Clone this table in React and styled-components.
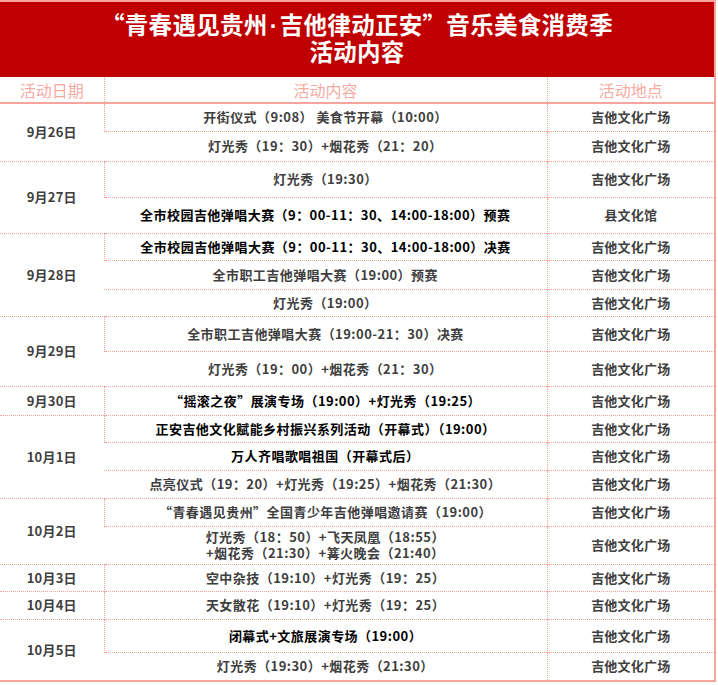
import styled, { createGlobalStyle } from "styled-components";

const GlobalStyle = createGlobalStyle`
  body {
    margin: 0;
    background: #ffffff;
    font-family: "Noto Sans CJK SC", "Noto Sans", sans-serif;
  }
`;

const Sheet = styled.div`
  width: 716px;
  box-sizing: border-box;
  border-top: 2px solid #f7a49c;
  border-right: 2px solid #f7a49c;
  border-bottom: 2px solid #f7a49c;
`;

const Title = styled.div`
  background: #c00000;
  color: #ffffff;
  height: 75px;
  display: flex;
  flex-direction: column;
  align-items: center;
  justify-content: center;
  font-size: 23.5px;
  font-weight: 700;
  line-height: 25px;
  letter-spacing: 0.3px;
  padding-bottom: 4px;
  box-sizing: border-box;
`;

const Dot = styled.span`
  font-family: "Liberation Sans", sans-serif;
  margin: 0 2px;
`;

const Table = styled.table`
  width: 714px;
  border-collapse: collapse;
  table-layout: fixed;
`;

const HeadCell = styled.th`
  height: 25px;
  padding: 0;
  font-size: 16px;
  font-weight: 400;
  color: #f6aaa4;
  border-left: 1px dotted #f2a29a;
  border-bottom: 2px solid #f7a49c;
  &:first-child {
    border-left: none;
  }
`;

const Cell = styled.td`
  padding: 0;
  text-align: center;
  vertical-align: middle;
  font-size: 13px;
  font-weight: 700;
  line-height: 16px;
  letter-spacing: ${(p) => (p.$wide ? "0.45px" : "0.2px")};
  color: ${(p) => (p.$dark ? "#000000" : "#3f3f3f")};
  border-left: 1px dotted #f2a29a;
  border-top: 1px dotted #f2a29a;
  &:first-child {
    border-left: none;
  }
`;

const DateCell = styled(Cell)`
  border-left: none;
`;

const rows = [
  { date: "9月26日", span: 2, h: 28, text: "开街仪式（9:08） 美食节开幕（10:00）" },
  { h: 30, text: "灯光秀（19：30）+烟花秀（21：20）" },
  { date: "9月27日", span: 2, h: 36, text: "灯光秀（19:30）" },
  { h: 36, dark: true, text: "全市校园吉他弹唱大赛（9：00-11：30、14:00-18:00）预赛", place: "县文化馆" },
  { date: "9月28日", span: 3, h: 27, dark: true, text: "全市校园吉他弹唱大赛（9：00-11：30、14:00-18:00）决赛" },
  { h: 29, text: "全市职工吉他弹唱大赛（19:00）预赛" },
  { h: 27, text: "灯光秀（19:00）" },
  { date: "9月29日", span: 2, h: 35, text: "全市职工吉他弹唱大赛（19:00-21：30）决赛" },
  { h: 35, text: "灯光秀（19：00）+烟花秀（21：30）" },
  { date: "9月30日", span: 1, h: 29, dark: true, text: "“摇滚之夜”展演专场（19:00）+灯光秀（19:25）" },
  { date: "10月1日", span: 3, h: 27, dark: true, text: "正安吉他文化赋能乡村振兴系列活动（开幕式）（19:00）" },
  { h: 28, dark: true, text: "万人齐唱歌唱祖国（开幕式后）" },
  { h: 28, text: "点亮仪式（19：20）+灯光秀（19:25）+烟花秀（21:30）" },
  { date: "10月2日", span: 2, h: 28, text: "“青春遇见贵州”全国青少年吉他弹唱邀请赛（19:00）" },
  { h: 38, text: ["灯光秀（18：50）+飞天凤凰（18:55）", "+烟花秀（21:30）+篝火晚会（21:40）"] },
  { date: "10月3日", span: 1, h: 27, text: "空中杂技（19:10）+灯光秀（19：25）" },
  { date: "10月4日", span: 1, h: 28, text: "天女散花（19:10）+灯光秀（19：25）" },
  { date: "10月5日", span: 2, h: 33, dark: true, text: "闭幕式+文旅展演专场（19:00）" },
  { h: 28, text: "灯光秀（19:30）+烟花秀（21:30）" },
];

export default function App() {
  return (
    <>
      <GlobalStyle />
      <Sheet>
        <Title>
          <div>
            “青春遇见贵州<Dot>·</Dot>吉他律动正安”音乐美食消费季
          </div>
          <div>活动内容</div>
        </Title>
        <Table>
          <colgroup>
            <col style={{ width: 104 }} />
            <col style={{ width: 443 }} />
            <col style={{ width: 167 }} />
          </colgroup>
          <thead>
            <tr>
              <HeadCell>活动日期</HeadCell>
              <HeadCell>活动内容</HeadCell>
              <HeadCell>活动地点</HeadCell>
            </tr>
          </thead>
          <tbody>
            {rows.map((r, i) => (
              <tr key={i} style={{ height: r.h }}>
                {r.date && <DateCell rowSpan={r.span}>{r.date}</DateCell>}
                <Cell $dark={r.dark} $wide>
                  {Array.isArray(r.text)
                    ? r.text.map((t) => <div key={t}>{t}</div>)
                    : r.text}
                </Cell>
                <Cell>{r.place || "吉他文化广场"}</Cell>
              </tr>
            ))}
          </tbody>
        </Table>
      </Sheet>
    </>
  );
}
